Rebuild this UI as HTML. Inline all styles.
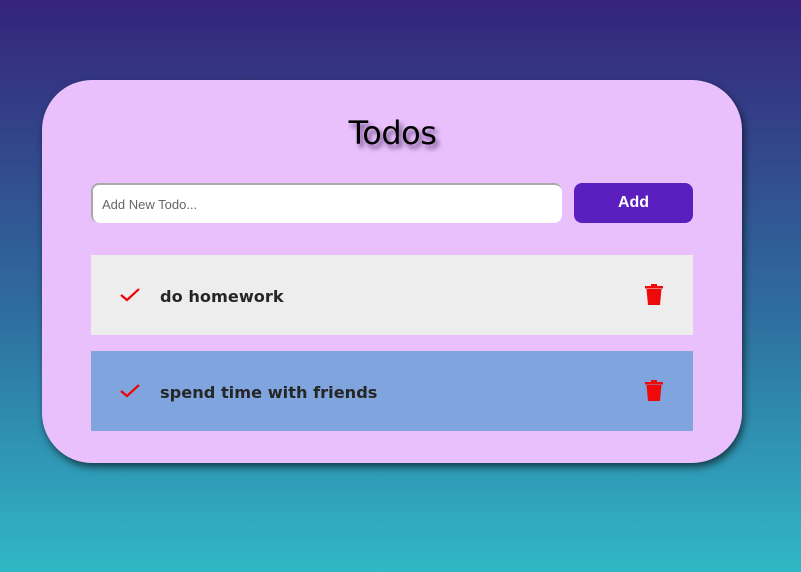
<!DOCTYPE html>
<html><head><style>
body{margin:0;width:801px;height:572px;background:linear-gradient(#35247a,#2f6e9f 55%,#30b8c6);font-family:"DejaVu Sans","Liberation Sans",sans-serif;position:relative;overflow:hidden}
.card{position:absolute;left:42px;top:80px;width:700px;height:383px;background:#e9c0fc;border-radius:50px;box-shadow:2px 4px 8px rgba(0,0,0,.6)}
h1{position:absolute;left:0;width:785px;top:114px;margin:0;text-align:center;font-weight:normal;font-size:32px;letter-spacing:-0.5px;color:#000;text-shadow:3px 4px 5px rgba(60,30,90,.7);font-family:"DejaVu Sans",sans-serif}
.inp{position:absolute;left:91px;top:183px;width:471px;height:40px;background:#fff;border-radius:8px;border-top:2px solid #aaa;border-left:2px solid #aaa;box-sizing:border-box;font-family:"Liberation Sans",sans-serif;font-size:13px;color:#666;padding:12px 0 0 9px}
.btn{position:absolute;left:574px;top:183px;width:119px;height:40px;background:#5b1fbf;border-radius:8px;color:#fff;font-family:"Liberation Sans",sans-serif;font-weight:bold;font-size:16px;text-align:center;line-height:40px}
.item{position:absolute;left:91px;width:602px;height:80px}
.item span{position:absolute;left:69px;top:32px;font-weight:bold;font-size:16.2px;color:#262626}
.item svg{position:absolute}
</style></head><body>
<div class="card"></div>
<h1>Todos</h1>
<div class="inp">Add New Todo...</div>
<div class="btn">Add</div>
<div class="item" style="top:255px;background:#ededed">
<svg style="left:29px;top:33px" width="20" height="14" viewBox="0 0 20 14"><path d="M1 7 L7 12 L19 1" stroke="#f00000" stroke-width="2.2" fill="none"/></svg>
<span>do homework</span>
<svg style="left:553px;top:28px" width="20" height="24" viewBox="0 0 20 24"><path d="M7 1h6v2h6v2.5H1V3h6z M2.5 6h15l-1.5 16h-12z" fill="#ee0a0a"/></svg>
</div>
<div class="item" style="top:351px;background:#80a4dd">
<svg style="left:29px;top:33px" width="20" height="14" viewBox="0 0 20 14"><path d="M1 7 L7 12 L19 1" stroke="#f00000" stroke-width="2.2" fill="none"/></svg>
<span>spend time with friends</span>
<svg style="left:553px;top:28px" width="20" height="24" viewBox="0 0 20 24"><path d="M7 1h6v2h6v2.5H1V3h6z M2.5 6h15l-1.5 16h-12z" fill="#ee0a0a"/></svg>
</div>
</body></html>
